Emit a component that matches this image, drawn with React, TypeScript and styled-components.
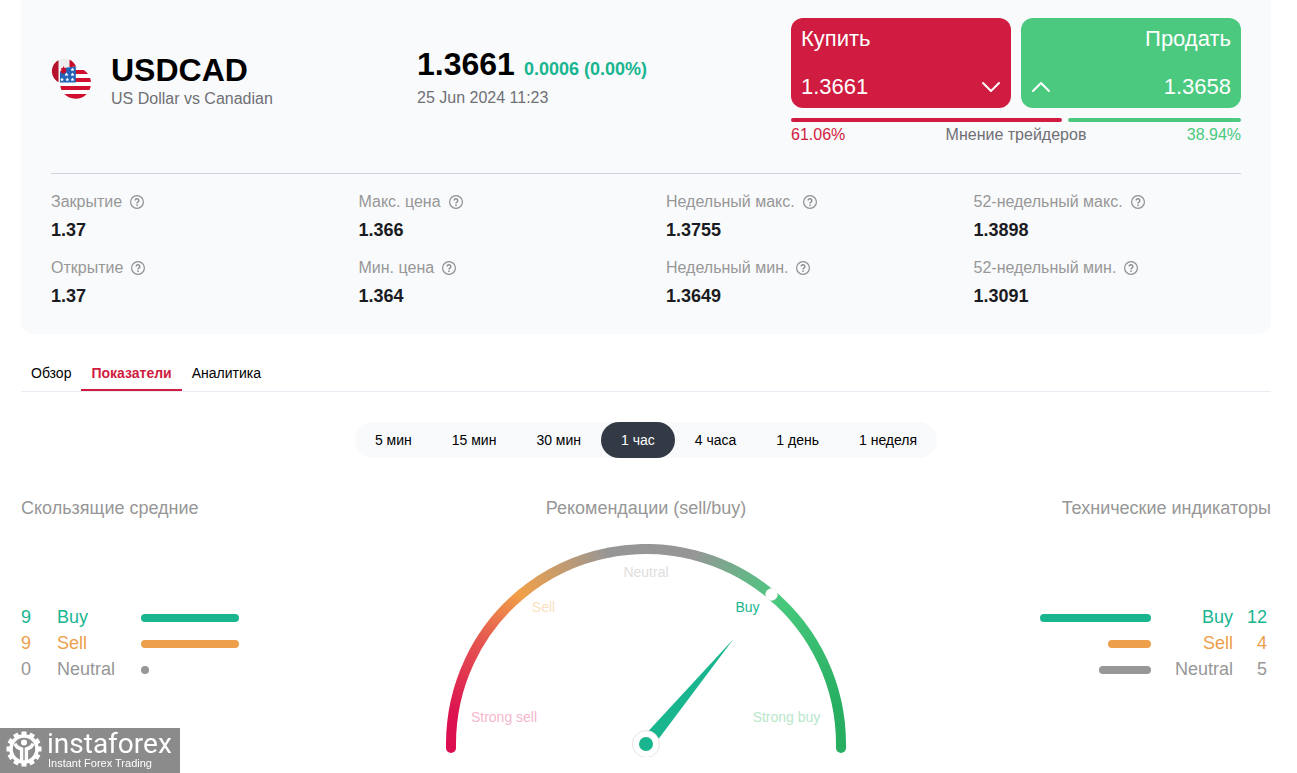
import React from 'react';
import styled, { createGlobalStyle } from 'styled-components';

const color = {
  text: '#000000',
  strong: '#1b1c22',
  muted: '#6f7074',
  label: '#979797',
  panel: '#f9fafc',
  rule: '#cfd2e2',
  tabRule: '#e9ecf3',
  red: '#cf1c40',
  green: '#4ac97f',
  teal: '#18b58f',
  orange: '#ed9f4b',
  grey: '#979797',
  dark: '#343946',
};

const GlobalStyle = createGlobalStyle`
  *, *::before, *::after { box-sizing: border-box; }
  body {
    margin: 0;
    background: #ffffff;
    color: ${color.text};
    font-family: "Liberation Sans", Arial, sans-serif;
    font-size: 16px;
    line-height: 22px;
  }
  button { font: inherit; border: 0; margin: 0; cursor: pointer; }
  h1, h2, p, dl, dd, ul { margin: 0; padding: 0; }
`;

const Page = styled.main`
  padding: 0 26px 16px 21px;
`;

const QuoteCard = styled.section`
  padding: 0 30px 26px;
  background: ${color.panel};
  border-radius: 0 0 12px 12px;
`;

const QuoteHeader = styled.header`
  display: grid;
  grid-template-columns: 366px 1fr 450px;
  padding: 18px 0 27px;
  border-bottom: 1px solid ${color.rule};
`;

const Instrument = styled.div`
  display: flex;
  align-items: center;
  align-self: start;
  gap: 20px;
  padding-top: 34px;
`;

const InstrumentName = styled.h1`
  font-size: 32px;
  line-height: 36px;
`;

const Muted = styled.p`
  color: ${color.muted};
`;

const PriceBlock = styled.div`
  padding-top: 28px;
`;

const PriceLine = styled.div`
  display: flex;
  align-items: baseline;
  gap: 9px;
  line-height: 36px;
`;

const Price = styled.strong`
  font-size: 32px;
`;

const Change = styled.strong`
  font-size: 18px;
  color: ${color.teal};
`;

const TradeButtons = styled.div`
  display: grid;
  grid-template-columns: 1fr 1fr;
  gap: 10px;
`;

const TradeButton = styled.button<{ $side: 'buy' | 'sell' }>`
  display: flex;
  flex-direction: column;
  justify-content: space-between;
  height: 90px;
  padding: 9px 10px;
  border-radius: 12px;
  background: ${(p) => (p.$side === 'buy' ? color.red : color.green)};
  color: #ffffff;
  font-size: 22px;
  line-height: 24px;
  text-align: ${(p) => (p.$side === 'buy' ? 'left' : 'right')};
`;

const TradeTitle = styled.span`
  width: 100%;
`;

const TradePrice = styled.span`
  display: flex;
  align-items: center;
  justify-content: space-between;
  width: 100%;
`;

const OpinionBars = styled.div`
  display: flex;
  gap: 6px;
  margin: 10px 0 2px;
`;

const OpinionBar = styled.div<{ $share: number; $color: string }>`
  flex: ${(p) => p.$share} 1 0;
  height: 4px;
  border-radius: 2px;
  background: ${(p) => p.$color};
`;

const OpinionLegend = styled.div`
  display: flex;
  justify-content: space-between;
  color: ${color.muted};
`;

const OpinionShare = styled.span<{ $color: string }>`
  color: ${(p) => p.$color};
`;

const StatGrid = styled.dl`
  display: grid;
  grid-template-columns: repeat(4, 1fr);
  gap: 15px 40px;
  padding-top: 17px;
`;

const Stat = styled.div`
  display: flex;
  flex-direction: column;
  gap: 5px;
`;

const StatLabel = styled.dt`
  display: flex;
  align-items: center;
  gap: 8px;
  color: ${color.label};
`;

const StatValue = styled.dd`
  color: ${color.strong};
  font-size: 18px;
  font-weight: 700;
  line-height: 24px;
`;

const Tabs = styled.nav`
  display: flex;
  margin-top: 23px;
  border-bottom: 1px solid ${color.tabRule};
`;

const Tab = styled.button<{ $active?: boolean }>`
  padding: 8px 10px;
  background: none;
  border-bottom: 2px solid ${(p) => (p.$active ? color.red : 'transparent')};
  color: ${(p) => (p.$active ? color.red : color.text)};
  font-size: 14px;
  font-weight: ${(p) => (p.$active ? 700 : 400)};
  line-height: 16px;
`;

const Periods = styled.div`
  display: flex;
  width: fit-content;
  margin: 30px auto 38px;
  border-radius: 18px;
  background: ${color.panel};
`;

const Period = styled.button<{ $active?: boolean }>`
  height: 36px;
  padding: 0 20px;
  border-radius: 18px;
  background: ${(p) => (p.$active ? color.dark : 'transparent')};
  color: ${(p) => (p.$active ? '#ffffff' : color.text)};
  font-size: 14px;
`;

const Summary = styled.section`
  display: grid;
  grid-template-columns: 1fr 400px 1fr;
`;

const SummaryColumn = styled.div<{ $align: 'start' | 'center' | 'end' }>`
  display: flex;
  flex-direction: column;
  align-items: ${(p) => p.$align};
`;

const SummaryTitle = styled.h2`
  color: ${color.label};
  font-size: 18px;
  font-weight: 400;
  line-height: 24px;
`;

const SignalList = styled.ul`
  margin-top: 84px;
  list-style: none;
`;

const SignalRow = styled.li<{ $color: string; $mirrored?: boolean }>`
  display: flex;
  flex-direction: ${(p) => (p.$mirrored ? 'row-reverse' : 'row')};
  align-items: center;
  padding: ${(p) => (p.$mirrored ? '0 4px 0 0' : '0')};
  color: ${(p) => p.$color};
  font-size: 18px;
  line-height: 26px;
  text-align: ${(p) => (p.$mirrored ? 'right' : 'left')};
`;

const SignalCount = styled.span<{ $width: number }>`
  width: ${(p) => p.$width}px;
`;

const SignalName = styled.span<{ $width: number }>`
  width: ${(p) => p.$width}px;
`;

const SignalBar = styled.span<{ $width: number }>`
  width: ${(p) => p.$width}px;
  height: 8px;
  margin-top: 2px;
  border-radius: 4px;
  background: currentColor;
`;

const GaugeDrawing = styled.svg`
  display: block;
  margin-top: 24px;
  font-size: 14px;
`;

const Watermark = styled.aside`
  position: fixed;
  left: 0;
  bottom: 0;
  display: flex;
  align-items: flex-start;
  gap: 5px;
  width: 180px;
  height: 45px;
  padding: 3px 0 0 6px;
  background: #8b8b8b;
  color: #ffffff;
`;

const WatermarkText = styled.div`
  display: flex;
  flex-direction: column;
`;

const WatermarkName = styled.span`
  font-family: Roboto, sans-serif;
  font-size: 28px;
  line-height: 26px;
`;

const WatermarkTagline = styled.span`
  padding-left: 1px;
  font-size: 11px;
  line-height: 12px;
`;

function PairFlag() {
  const star = (x: number, y: number) => (
    <path
      key={`${x}-${y}`}
      d={`M${x} ${y - 2}l.6 1.3 1.4.1-1.1.9.4 1.5-1.3-.8-1.3.8.4-1.5-1.1-.9 1.4-.1z`}
      fill="#fff"
    />
  );
  return (
    <svg width="40" height="46" viewBox="0 0 40 46" aria-hidden="true">
      <defs>
        <clipPath id="flag-back"><path d="M8 24.500A12.500 12.500 0 1 1 25.500 10V24.500z" /></clipPath>
        <clipPath id="flag-front">
          <path d="M9 25V14L16 9.500 25 8.500V9.700A15.500 15.500 0 1 1 9 25z" />
        </clipPath>
      </defs>
      <g clipPath="url(#flag-back)">
        <rect width="26" height="27" fill="#eeeeee" />
        <rect width="7.500" height="27" fill="#b5122b" />
        <rect x="18.500" width="8" height="27" fill="#c80d2b" />
        <path d="M12.500 8l1 2 2-.5-.5 2.500 1.500 1-2.500 3H10l-.5-3 1-1-.5-2 1.500.5z" fill="#c80d2b" />
      </g>
      <g clipPath="url(#flag-front)">
        <rect x="8" y="8" width="33" height="33" fill="#fff" />
        <path d="M8 12h33v4H8zM8 20h33v4H8zM8 28h33v4H8zM8 36h33v5H8z" fill="#d0102f" />
        <path d="M9 8H24.800V24.500H9z" fill="#2263b8" />
        {[[21.5, 11.5], [15.5, 16.5], [21.5, 16.5], [11, 21.5], [16.3, 21.5], [21.5, 21.5]].map(([x, y]) => star(x, y))}
      </g>
      <path d="M12.500 9l1 1.500 1.500-.4-.3 2 1 1-2 2.500H10.500l-.5-2.500 1-1-.4-2 1.200.4z" fill="#c80d2b" />
    </svg>
  );
}

function Chevron({ up }: { up?: boolean }) {
  return (
    <svg width="20" height="12" viewBox="0 0 20 12" fill="none" stroke="#fff" strokeWidth="2" strokeLinecap="round" strokeLinejoin="round" aria-hidden="true">
      <path d={up ? 'M2 10l8-8 8 8' : 'M2 2l8 8 8-8'} />
    </svg>
  );
}

function HelpIcon() {
  return (
    <svg width="14" height="14" viewBox="0 0 14 14" fill="none" stroke="#8f8f8f" aria-hidden="true">
      <circle cx="7" cy="7" r="6.400" strokeWidth="1.200" />
      <path d="M5.200 5.600a1.800 1.800 0 1 1 2.700 1.500c-.7.400-.9.700-.9 1.300" strokeWidth="1.500" />
      <path d="M7 9.400v1.500" strokeWidth="1.500" />
    </svg>
  );
}

function Gauge() {
  return (
    <GaugeDrawing width="400" height="213" viewBox="0 0 400 213" role="img" aria-label="Buy">
      <defs>
        <linearGradient id="to-sell" gradientUnits="userSpaceOnUse" x1="5" y1="204" x2="75" y2="51">
          <stop offset="0" stopColor="#dc0d50" />
          <stop offset="0.2" stopColor="#dc1450" />
          <stop offset="0.65" stopColor="#e55550" />
          <stop offset="1" stopColor="#f0a048" />
        </linearGradient>
        <linearGradient id="to-neutral" gradientUnits="userSpaceOnUse" x1="75" y1="51" x2="163" y2="9">
          <stop offset="0" stopColor="#f0a048" />
          <stop offset="1" stopColor="#969696" />
        </linearGradient>
        <linearGradient id="to-buy" gradientUnits="userSpaceOnUse" x1="247" y1="11" x2="332" y2="56">
          <stop offset="0" stopColor="#969696" />
          <stop offset="1" stopColor="#48c97e" />
        </linearGradient>
        <linearGradient id="to-strong-buy" gradientUnits="userSpaceOnUse" x1="332" y1="56" x2="395" y2="204">
          <stop offset="0" stopColor="#48c97e" />
          <stop offset="0.75" stopColor="#27ae60" />
          <stop offset="1" stopColor="#27ae60" />
        </linearGradient>
      </defs>
      <g fill="none" strokeWidth="10">
        <path d="M5 204V200A195 195 0 0 1 74.700 50.600" stroke="url(#to-sell)" strokeLinecap="round" />
        <path d="M325.300 50.600A195 195 0 0 1 395 200V204" stroke="url(#to-strong-buy)" strokeLinecap="round" />
        <path d="M74.700 50.600A195 195 0 0 1 162.800 8.600" stroke="url(#to-neutral)" />
        <path d="M247.200 10.800A195 195 0 0 1 331.700 56.200" stroke="url(#to-buy)" />
        <path d="M162 8.750A195 195 0 0 1 248 11" stroke="#969696" />
      </g>
      <circle cx="325.500" cy="50.500" r="6" fill="#fff" stroke="#e6e6e6" strokeWidth="0.500" />
      <g textAnchor="middle">
        <text x="58" y="178" fill="#f5b6cb">Strong sell</text>
        <text x="97.500" y="68" fill="#fadfc0">Sell</text>
        <text x="200" y="33" fill="#dedede">Neutral</text>
        <text x="301.500" y="68" fill={color.teal}>Buy</text>
        <text x="340.500" y="178" fill="#b9e6cb">Strong buy</text>
      </g>
      <path d="M194.600 195.500L287.500 95 205.400 204.500z" fill={color.teal} />
      <circle cx="200" cy="200" r="13.500" fill="#fff" stroke="#e3e3e3" />
      <circle cx="200" cy="200" r="7" fill={color.teal} />
    </GaugeDrawing>
  );
}

function GearLogo() {
  const teeth = Array.from({ length: 12 }, (_, i) => i * 30);
  return (
    <svg width="36" height="36" viewBox="0 0 36 36" aria-hidden="true">
      {teeth.map((angle) => (
        <rect key={angle} x="15.500" y="0.500" width="5" height="5" fill="#fff" transform={`rotate(${angle} 18 18)`} />
      ))}
      <circle cx="18" cy="18" r="13" fill="none" stroke="#fff" strokeWidth="3.600" />
      <circle cx="18" cy="11.500" r="3" fill="#fff" />
      <path d="M9 12.500q1 4 6.600 5.500V31M27 12.500q-1 4-6.600 5.500V31" fill="none" stroke="#fff" strokeWidth="3.400" />
    </svg>
  );
}

const stats = [
  ['Закрытие', '1.37'],
  ['Макс. цена', '1.366'],
  ['Недельный макс.', '1.3755'],
  ['52-недельный макс.', '1.3898'],
  ['Открытие', '1.37'],
  ['Мин. цена', '1.364'],
  ['Недельный мин.', '1.3649'],
  ['52-недельный мин.', '1.3091'],
];

const tabs = ['Обзор', 'Показатели', 'Аналитика'];
const periods = ['5 мин', '15 мин', '30 мин', '1 час', '4 часа', '1 день', '1 неделя'];

type Signal = { name: string; count: number; bar: number; color: string };

const averages: Signal[] = [
  { name: 'Buy', count: 9, bar: 98, color: color.teal },
  { name: 'Sell', count: 9, bar: 98, color: color.orange },
  { name: 'Neutral', count: 0, bar: 8, color: color.grey },
];

const indicators: Signal[] = [
  { name: 'Buy', count: 12, bar: 111, color: color.teal },
  { name: 'Sell', count: 4, bar: 43, color: color.orange },
  { name: 'Neutral', count: 5, bar: 52, color: color.grey },
];

function Signals({ items, mirrored }: { items: Signal[]; mirrored?: boolean }) {
  return (
    <SignalList>
      {items.map((s) => (
        <SignalRow key={s.name} $color={s.color} $mirrored={mirrored}>
          <SignalCount $width={mirrored ? 34 : 36}>{s.count}</SignalCount>
          <SignalName $width={mirrored ? 82 : 84}>{s.name}</SignalName>
          <SignalBar $width={s.bar} />
        </SignalRow>
      ))}
    </SignalList>
  );
}

export default function App() {
  return (
    <>
      <GlobalStyle />
      <Page>
        <QuoteCard>
          <QuoteHeader>
            <Instrument>
              <PairFlag />
              <div>
                <InstrumentName>USDCAD</InstrumentName>
                <Muted>US Dollar vs Canadian</Muted>
              </div>
            </Instrument>
            <PriceBlock>
              <PriceLine>
                <Price>1.3661</Price>
                <Change>0.0006 (0.00%)</Change>
              </PriceLine>
              <Muted>25 Jun 2024 11:23</Muted>
            </PriceBlock>
            <div>
              <TradeButtons>
                <TradeButton $side="buy">
                  <TradeTitle>Купить</TradeTitle>
                  <TradePrice>1.3661<Chevron /></TradePrice>
                </TradeButton>
                <TradeButton $side="sell">
                  <TradeTitle>Продать</TradeTitle>
                  <TradePrice><Chevron up />1.3658</TradePrice>
                </TradeButton>
              </TradeButtons>
              <OpinionBars>
                <OpinionBar $share={61.06} $color={color.red} />
                <OpinionBar $share={38.94} $color={color.green} />
              </OpinionBars>
              <OpinionLegend>
                <OpinionShare $color={color.red}>61.06%</OpinionShare>
                <span>Мнение трейдеров</span>
                <OpinionShare $color={color.green}>38.94%</OpinionShare>
              </OpinionLegend>
            </div>
          </QuoteHeader>
          <StatGrid>
            {stats.map(([label, value]) => (
              <Stat key={label}>
                <StatLabel>{label}<HelpIcon /></StatLabel>
                <StatValue>{value}</StatValue>
              </Stat>
            ))}
          </StatGrid>
        </QuoteCard>

        <Tabs>
          {tabs.map((tab) => (
            <Tab key={tab} $active={tab === 'Показатели'}>{tab}</Tab>
          ))}
        </Tabs>

        <Periods>
          {periods.map((period) => (
            <Period key={period} $active={period === '1 час'}>{period}</Period>
          ))}
        </Periods>

        <Summary>
          <SummaryColumn $align="start">
            <SummaryTitle>Скользящие средние</SummaryTitle>
            <Signals items={averages} />
          </SummaryColumn>
          <SummaryColumn $align="center">
            <SummaryTitle>Рекомендации (sell/buy)</SummaryTitle>
            <Gauge />
          </SummaryColumn>
          <SummaryColumn $align="end">
            <SummaryTitle>Технические индикаторы</SummaryTitle>
            <Signals items={indicators} mirrored />
          </SummaryColumn>
        </Summary>
      </Page>

      <Watermark>
        <GearLogo />
        <WatermarkText>
          <WatermarkName>instaforex</WatermarkName>
          <WatermarkTagline>Instant Forex Trading</WatermarkTagline>
        </WatermarkText>
      </Watermark>
    </>
  );
}
